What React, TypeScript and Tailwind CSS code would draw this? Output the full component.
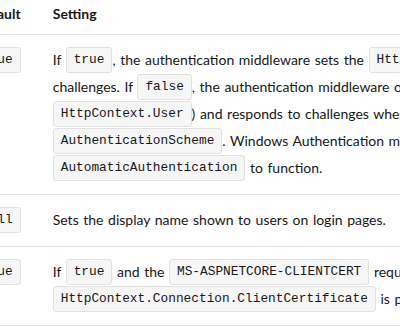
import type { ReactNode } from "react";

function Code({ children }: { children: ReactNode }) {
  return (
    <code className="inline-block align-top rounded-[3px] border border-[#e1e1e1] bg-[#f6f6f6] px-[7px] font-['Liberation_Mono',monospace] text-[12.8px] leading-[24px] text-[#171717]">
      {children}
    </code>
  );
}

function Line({ children }: { children: ReactNode }) {
  return <div className="h-[27px] whitespace-nowrap leading-[26px]">{children}</div>;
}

const rows: { def: string; lines: ReactNode[] }[] = [
  {
    def: "true",
    lines: [
      <>
        If <Code>true</Code>, the authentication middleware sets the <Code>HttpContext.User</Code> and responds to generic
      </>,
      <>
        challenges. If <Code>false</Code>, the authentication middleware only provides an identity (
      </>,
      <>
        <Code>HttpContext.User</Code>) and responds to challenges when explicitly requested by the
      </>,
      <>
        <Code>AuthenticationScheme</Code>. Windows Authentication must be enabled in IIS for
      </>,
      <>
        <Code>AutomaticAuthentication</Code> to function.
      </>,
    ],
  },
  {
    def: "null",
    lines: [<>Sets the display name shown to users on login pages.</>],
  },
  {
    def: "true",
    lines: [
      <>
        If <Code>true</Code> and the <Code>MS-ASPNETCORE-CLIENTCERT</Code> request header is present, the
      </>,
      <>
        <Code>HttpContext.Connection.ClientCertificate</Code> is populated.
      </>,
    ],
  },
];

export default function App() {
  return (
    <div className="h-[332px] w-[400px] overflow-hidden bg-white font-['Lato',sans-serif] text-[14px] text-[#171717] [word-spacing:1px]">
      <table className="-ml-[42px] border-collapse">
        <thead>
          <tr className="border-b border-[#e3e3e3]">
            <th className="w-[81px] px-4 pt-[2px] pb-[8px] text-left font-bold leading-[24px]">Default</th>
            <th className="px-4 pt-[2px] pb-[8px] text-left font-bold leading-[24px]">Setting</th>
          </tr>
        </thead>
        <tbody>
          {rows.map((row, i) => (
            <tr key={i} className="border-b border-[#e3e3e3] align-top">
              <td className="w-[81px] px-4 pt-3 pb-3">
                <Line>
                  <Code>{row.def}</Code>
                </Line>
              </td>
              <td className="px-4 pt-3 pb-3">
                {row.lines.map((line, j) => (
                  <Line key={j}>{line}</Line>
                ))}
              </td>
            </tr>
          ))}
        </tbody>
      </table>
    </div>
  );
}
